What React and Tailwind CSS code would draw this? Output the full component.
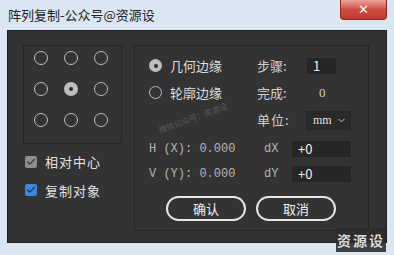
import { Check, ChevronDown } from 'lucide-react'

const cjk = { fontFamily: '"Noto Sans CJK SC", "Noto Sans", sans-serif' }
const serif = { fontFamily: '"Liberation Serif", "Noto Sans CJK SC", serif' }
const mono = { fontFamily: '"Liberation Mono", "DejaVu Sans Mono", monospace' }

function Dot({ on, big }) {
  const size = big ? 'w-[14px] h-[14px]' : 'w-[13px] h-[13px]'
  if (on) {
    return (
      <span className={`${size} rounded-full bg-[#bdbdbd] flex items-center justify-center`}>
        <span className="w-[4px] h-[4px] rounded-full bg-[#2e2e2e]" />
      </span>
    )
  }
  return <span className={`${size} rounded-full border border-[#bdbdbd]`} />
}

function Radio({ on, label }) {
  return (
    <div className="flex items-center gap-[8px] w-[108px]">
      <Dot on={on} />
      <span className="text-[13px] text-[#dedede]" style={cjk}>{label}</span>
    </div>
  )
}

function Field({ value, w }) {
  return (
    <div className={`h-[16px] bg-[#262626] text-[#f0f0f0] text-[13px] leading-[16px] px-[6px] ${w}`} style={cjk}>
      {value}
    </div>
  )
}

export default function App() {
  return (
    <div className="w-[394px] h-[255px] bg-[#dbe6f3] flex flex-col overflow-hidden relative" style={cjk}>
      {/* title bar */}
      <div className="h-[30px] flex items-start">
        <span className="text-[13px] text-[#222] pl-[8px] pt-[6px] leading-[18px]">阵列复制-公众号@资源设</span>
        <div className="ml-auto mr-[7px] w-[47px] h-[20px] rounded-b-[4px] bg-gradient-to-b from-[#e8a49c] via-[#cf4b3f] to-[#c03a2f] border border-[#8a2a22] border-t-0 flex items-center justify-center">
          <span className="text-white text-[13px] font-bold leading-none" style={{ fontFamily: '"DejaVu Sans", sans-serif' }}>✕</span>
        </div>
      </div>

      {/* dark body */}
      <div className="mx-[7px] h-[213px] bg-[#333333] border border-[#1e1e1e] flex gap-[12px] pl-[15px] pt-[14px]">
        <div className="flex flex-col">
          <div className="w-[99px] h-[99px] border border-[#262626] flex flex-col gap-[17px] pl-[10px] pt-[5px]">
            {[0, 1, 2].map(r => (
              <div key={r} className="flex gap-[16px]">
                {[0, 1, 2].map(c => (
                  <Dot key={c} big on={r === 1 && c === 1} />
                ))}
              </div>
            ))}
          </div>
          <div className="flex items-center gap-[8px] mt-[8px] ml-[2px]">
            <span className="w-[12px] h-[12px] rounded-[2px] bg-[#8e8e8e] flex items-center justify-center">
              <Check size={10} strokeWidth={3} className="text-[#3a3a3a]" />
            </span>
            <span className="text-[13px] text-[#e2e2e2] tracking-[1px]">相对中心</span>
          </div>
          <div className="flex items-center gap-[8px] mt-[9px] ml-[2px]">
            <span className="w-[12px] h-[12px] rounded-[2px] bg-[#3f86d9] flex items-center justify-center">
              <Check size={10} strokeWidth={3} className="text-[#17365c]" />
            </span>
            <span className="text-[13px] text-[#e2e2e2] tracking-[1px]">复制对象</span>
          </div>
        </div>

        <div className="w-[235px] h-[186px] border border-[#262626] flex flex-col pl-[14px] pt-[6px] relative">
          <div className="h-[27px] flex items-center">
            <Radio on label="几何边缘" />
            <span className="w-[50px] text-[13px] text-[#cfcfcf]">步骤:</span>
            <Field value="1" w="w-[29px]" />
          </div>
          <div className="h-[27px] flex items-center">
            <Radio label="轮廓边缘" />
            <span className="w-[62px] text-[13px] text-[#cfcfcf]">完成:</span>
            <span className="text-[13px] text-[#cfcfcf]" style={serif}>0</span>
          </div>
          <div className="h-[28px] flex items-center">
            <span className="w-[108px]" />
            <span className="w-[49px] text-[13px] text-[#cfcfcf] tracking-[1px]">单位:</span>
            <div className="w-[45px] h-[19px] bg-[#2a2a2a] border border-[#262626] flex items-center pl-[6px] text-[12px] text-[#e0e0e0]" style={serif}>
              mm
              <ChevronDown size={11} className="ml-auto mr-[3px] text-[#d0d0d0]" />
            </div>
          </div>
          <div className="h-[27px] flex items-center pt-[2px]">
            <span className="w-[115px] text-[12px] text-[#b4b4b4] whitespace-pre" style={mono}>H (X): 0.000</span>
            <span className="w-[28px] text-[12px] text-[#b4b4b4]" style={mono}>dX</span>
            <Field value="+0" w="w-[59px]" />
          </div>
          <div className="h-[26px] flex items-center">
            <span className="w-[115px] text-[12px] text-[#b4b4b4] whitespace-pre" style={mono}>V (Y): 0.000</span>
            <span className="w-[28px] text-[12px] text-[#b4b4b4]" style={mono}>dY</span>
            <Field value="+0" w="w-[59px]" />
          </div>
          <div className="flex gap-[10px] mt-[9px] ml-[17px]">
            <button className="w-[80px] h-[25px] rounded-full border-2 border-[#e6e6e6] text-[13px] text-[#f0f0f0]">确认</button>
            <button className="w-[80px] h-[25px] rounded-full border-2 border-[#e6e6e6] text-[13px] text-[#f0f0f0]">取消</button>
          </div>

          {/* faint diagonal watermark */}
          <span className="absolute left-[22px] top-[66px] -rotate-[20deg] text-[8px] text-[#5c5c5c] whitespace-nowrap">微信公众号：资源设</span>
        </div>
      </div>

      {/* corner watermark */}
      <div className="absolute right-[8px] bottom-[3px] w-[50px] h-[24px] bg-[#2c2c2c]/90 flex items-center justify-center">
        <span className="text-[14px] font-bold text-[#d8d8d8] tracking-[2px]">资源设</span>
      </div>
    </div>
  )
}
